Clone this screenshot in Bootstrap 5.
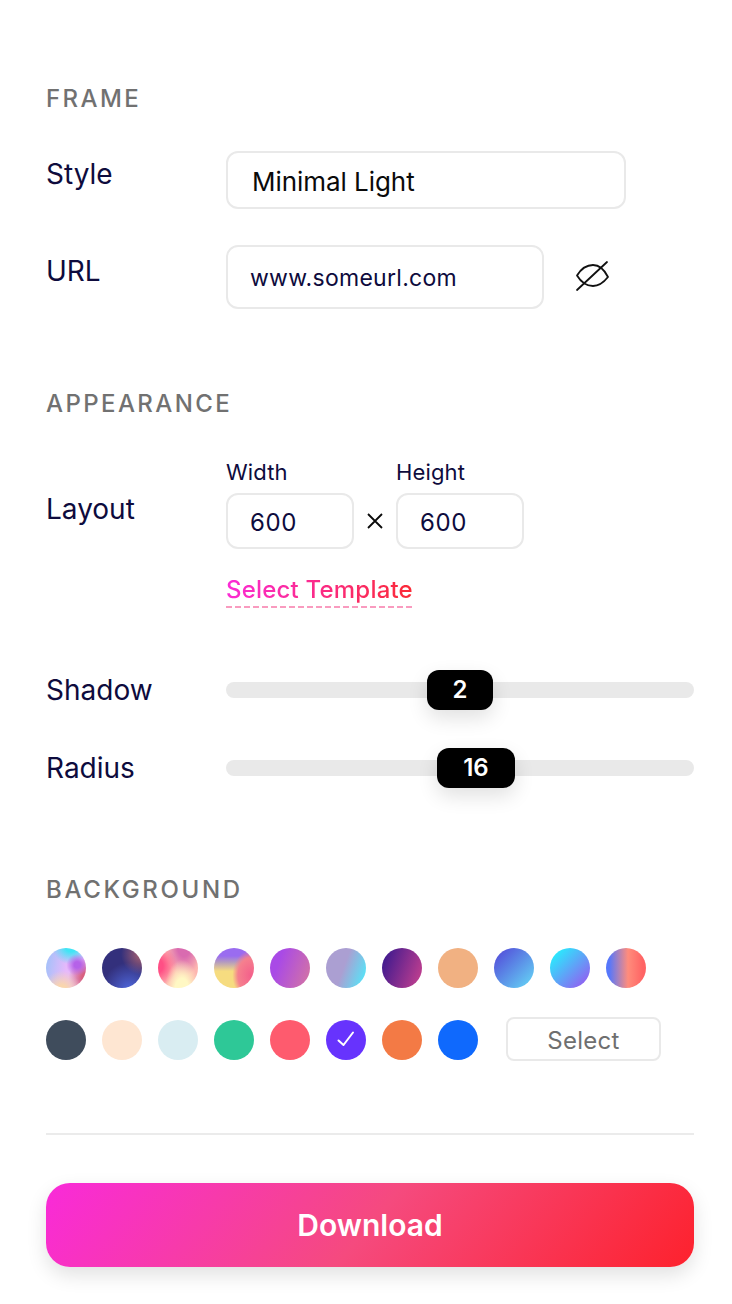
<!doctype html>
<html lang="en">
<head>
<meta charset="utf-8">
<title>Frame settings</title>
<link href="https://cdn.jsdelivr.net/npm/bootstrap@5.3.0/dist/css/bootstrap.min.css" rel="stylesheet">
<style>
html,body{background:#fff;}
body{font-family:Inter,"Liberation Sans",sans-serif;color:#0e0b3d;}
.panel{width:732px;height:1304px;padding:81px 38px 0 46px;overflow:hidden;}
.sect-title{font-size:24px;line-height:36px;font-weight:500;letter-spacing:2.4px;color:#717171;margin:0;}
.field-row{display:flex;}
.field-label{width:180px;flex:none;font-size:28px;line-height:40px;color:#0e0b3d;}
.style-row{margin-top:34px;}
.style-row .field-label{margin-top:3px;}
.url-row{margin-top:36px;align-items:flex-start;}
.url-row .field-label{margin-top:6px;}
input.box-input{border:2px solid #e9e9e9;border-radius:12px;background:#fff;box-shadow:none;color:#0e0b3d;}
input.style-input{width:400px;height:58px;padding:2px 24px 0;font-size:26px;letter-spacing:-.05px;color:#0a0a0a;}
input.url-input{width:318px;height:64px;padding:2px 22px 0;font-size:23px;letter-spacing:.28px;}
.eye-btn{margin-left:30px;margin-top:13px;width:36px;height:36px;padding:0;border:0;background:none;line-height:0;}
.appear{margin-top:77px;}
.layout-row{margin-top:35px;}
.layout-row .field-label{margin-top:32px;}
.dim-col{width:128px;}
.dim-label{font-size:22px;line-height:28px;height:36px;padding-top:1px;letter-spacing:.15px;}
input.dim-input{width:128px;height:56px;padding:3px 22px 0;font-size:24px;letter-spacing:.6px;}
.times{width:42px;height:56px;margin-top:36px;display:flex;align-items:center;justify-content:center;}
.tpl-wrap{margin:23px 0 0 180px;height:36px;}
.tpl-link{display:inline-block;font-size:24px;line-height:36px;letter-spacing:.2px;font-weight:500;text-decoration:none;height:36px;
  background:linear-gradient(100deg,#fb2bd9,#fb2a32) no-repeat;-webkit-background-clip:text;background-clip:text;color:transparent;position:relative;}
.tpl-link::after{content:"";position:absolute;left:0;right:0;bottom:0;height:2px;background:repeating-linear-gradient(90deg,#f99bbf 0 6px,transparent 6px 9px);}
.slide-row{display:flex;align-items:center;height:40px;}
.slide-row .field-label{line-height:40px;}
.slide-one{margin-top:62px;}
.slide-two{margin-top:38px;}
.rail{position:relative;flex:1;height:16px;border-radius:8px;background:#e9e9e9;}
.knob{position:absolute;top:-12px;height:40px;transform:translateX(-50%);border-radius:12px;background:#000;color:#fff;font-size:24px;line-height:40px;font-weight:600;text-align:center;box-shadow:0 8px 20px rgba(0,0,0,.12);}
.bg-sect{margin-top:84px;letter-spacing:2.65px;}
.swatches{display:flex;gap:16px;align-items:center;}
.sw{width:40px;height:40px;border-radius:50%;flex:none;display:flex;align-items:center;justify-content:center;}
.sw-a{margin-top:40px;}
.sw-b{margin-top:29px;height:46px;}
.sw1{background:radial-gradient(circle at 78% 42%,#b562e8 0 8%,transparent 28%),radial-gradient(circle at 40% 105%,#f9d6ae 0 10%,transparent 40%),radial-gradient(circle at 105% 75%,#d8607f 0 12%,transparent 38%),radial-gradient(circle at 62% -5%,#41e5f5 0 12%,transparent 38%),linear-gradient(100deg,#9cc2f9,#e6b9fb 50%,#e6b9fb);}
.sw2{background:radial-gradient(circle at 100% 15%,#b0646f 0,transparent 40%),radial-gradient(circle at 68% 105%,#4f68dd 0,transparent 55%),#33307c;}
.sw3{background:radial-gradient(ellipse at 60% 110%,#fff8c4 0 22%,transparent 52%),radial-gradient(circle at -5% 45%,#ff4f85 0 15%,transparent 45%),radial-gradient(ellipse at 65% -5%,#d96bb0 0 18%,transparent 50%),#fdb5b0;}
.sw4{background:radial-gradient(ellipse 46% 62% at 92% 68%,#f4608b 0,#f5808e 70%,transparent 100%),linear-gradient(180deg,#9a6cf0 20%,#b39ac0 35%,#f6dc80 58%);}
.sw5{background:linear-gradient(110deg,#a94ae6 25%,#d676a0);}
.sw6{background:linear-gradient(110deg,#ab9fd2 45%,#56e4f8 92%);}
.sw7{background:linear-gradient(110deg,#3f1a8e 8%,#bf3e8f 92%);}
.sw8{background:#f1b182;}
.sw9{background:linear-gradient(135deg,#5559dc 15%,#62c4f2 85%);}
.sw10{background:linear-gradient(135deg,#2de6fd 15%,#8b68f2 85%);}
.sw11{background:linear-gradient(90deg,#5677fb 8%,#ff8c7c 55%,#ff6464 92%);}
.sw12{background:#3f4c5c;}
.sw13{background:#fee6d2;}
.sw14{background:#d9edf2;}
.sw15{background:#2ec897;}
.sw16{background:#fe5b6e;}
.sw17{background:#6733fd;}
.sw18{background:#f37a45;}
.sw19{background:#0f69fd;}
.pick-btn{width:155px;height:44px;margin-left:12px;padding:3px 0 0;border:2px solid #e9e9e9;border-radius:8px;background:#fff;color:#6f6f6f;font-size:24px;line-height:36px;letter-spacing:.25px;align-self:flex-start;}
.rule-line{margin:70px 0 0;height:2px;background:#ebebeb;border:0;opacity:1;}
.dl-btn{display:block;width:100%;height:84px;margin-top:48px;border:0;border-radius:24px;color:#fff;font-size:30px;font-weight:600;background:linear-gradient(130deg,#f92bd6 2%,#f54a7e 50%,#fd2330 98%);box-shadow:0 8px 20px rgba(0,0,0,.12);}
</style>
</head>
<body>
<main class="panel">
  <h2 class="sect-title">FRAME</h2>
  <div class="field-row style-row">
    <label class="field-label">Style</label>
    <input class="form-control box-input style-input" value="Minimal Light" aria-label="Style">
  </div>
  <div class="field-row url-row">
    <label class="field-label">URL</label>
    <input class="form-control box-input url-input" value="www.someurl.com" aria-label="URL">
    <button class="btn eye-btn" aria-label="Hide URL">
      <svg width="36" height="36" viewBox="0 0 36 36" fill="none" stroke="#111" stroke-width="1.8" stroke-linecap="round" stroke-linejoin="round"><path d="M3 17.500C7 11 13 7 19 7c6 0 11 4 15 12-4 5-9 9-15 9-6 0-12-4-16-10.500z"/><path d="M33 4 3 32"/></svg>
    </button>
  </div>

  <h2 class="sect-title appear">APPEARANCE</h2>
  <div class="field-row layout-row">
    <label class="field-label">Layout</label>
    <div class="dim-col">
      <div class="dim-label">Width</div>
      <input class="form-control box-input dim-input" value="600" aria-label="Width">
    </div>
    <div class="times">
      <svg width="18" height="18" viewBox="0 0 18 18" stroke="#0a0a0a" stroke-width="1.8"><path d="M2 2l14 14M16 2 2 16"/></svg>
    </div>
    <div class="dim-col">
      <div class="dim-label">Height</div>
      <input class="form-control box-input dim-input" value="600" aria-label="Height">
    </div>
  </div>
  <div class="tpl-wrap"><a class="tpl-link" href="#">Select Template</a></div>

  <div class="slide-row slide-one">
    <span class="field-label">Shadow</span>
    <div class="rail"><div class="knob" style="left:50%;width:66px">2</div></div>
  </div>
  <div class="slide-row slide-two">
    <span class="field-label">Radius</span>
    <div class="rail"><div class="knob" style="left:53.4%;width:78px">16</div></div>
  </div>

  <h2 class="sect-title bg-sect">BACKGROUND</h2>
  <div class="swatches sw-a">
    <span class="sw sw1"></span><span class="sw sw2"></span><span class="sw sw3"></span><span class="sw sw4"></span><span class="sw sw5"></span><span class="sw sw6"></span><span class="sw sw7"></span><span class="sw sw8"></span><span class="sw sw9"></span><span class="sw sw10"></span><span class="sw sw11"></span>
  </div>
  <div class="swatches sw-b">
    <span class="sw sw12"></span><span class="sw sw13"></span><span class="sw sw14"></span><span class="sw sw15"></span><span class="sw sw16"></span>
    <span class="sw sw17"><svg width="20" height="20" viewBox="0 0 20 20" fill="none" stroke="#fff" stroke-width="2" stroke-linecap="round" stroke-linejoin="round"><path d="M2.500 10.500 7.500 15 17 2.500"/></svg></span>
    <span class="sw sw18"></span><span class="sw sw19"></span>
    <button class="btn pick-btn">Select</button>
  </div>

  <hr class="rule-line">
  <button class="btn dl-btn">Download</button>
</main>
<script src="https://cdn.jsdelivr.net/npm/bootstrap@5.3.0/dist/js/bootstrap.bundle.min.js"></script>
</body>
</html>
